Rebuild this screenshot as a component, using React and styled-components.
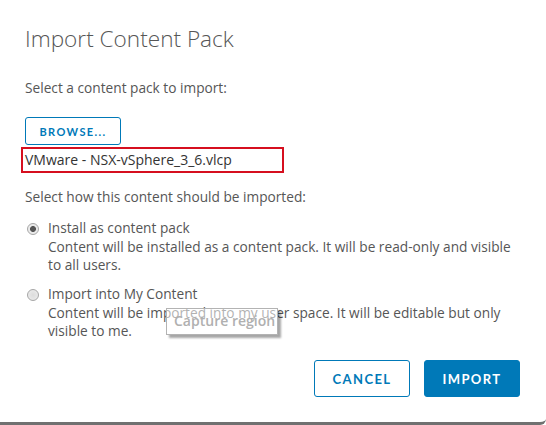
import React from "react";
import styled, { createGlobalStyle } from "styled-components";

const Global = createGlobalStyle`
  html, body { margin: 0; padding: 0; background: #fff; }
  body { font-family: "Open Sans", "Noto Sans", "Liberation Sans", sans-serif; color: #565656; }
  * { box-sizing: border-box; }
`;

const Dialog = styled.div`
  position: relative;
  width: 546px;
  height: 425px;
  background: #fff;
  border-bottom: 3px solid #707070;
  border-bottom-right-radius: 6px;
  padding: 24px 25px 0 25px;
  display: flex;
  flex-direction: column;
  overflow: hidden;
`;

const Title = styled.h1`
  margin: 0;
  font-weight: 300;
  font-size: 22.6px;
  line-height: 30px;
  color: #565656;
`;

const Text = styled.p`
  margin: ${(p) => p.$mt || 0}px 0 0 0;
  font-size: 13.7px;
  line-height: 18px;
  color: #565656;
`;

const OutlineButton = styled.button`
  width: 96px;
  height: ${(p) => p.$h}px;
  border: 1px solid #0079b8;
  border-radius: 3px;
  background: #fff;
  color: #0079b8;
  font-family: Lato, "Open Sans", sans-serif;
  font-weight: 700;
  font-size: ${(p) => p.$fs}px;
  letter-spacing: 1.4px;
  padding: 0;
  margin-top: ${(p) => p.$mt || 0}px;
`;

const PrimaryButton = styled(OutlineButton)`
  background: #0079b8;
  color: #fff;
`;

const FileBox = styled.div`
  margin: 2px 0 0 -4px;
  width: 263px;
  height: 26px;
  border: 2px solid #d60f1f;
  padding: 0 0 0 2px;
  font-size: 14px;
  line-height: 21px;
  color: #333;
`;

const Option = styled.div`
  display: flex;
  gap: 9px;
  margin-top: ${(p) => p.$mt}px;
`;

const Radio = styled.span`
  flex: none;
  width: 12px;
  height: 12px;
  margin: 4px 0 0 2px;
  border-radius: 50%;
  border: 1px solid #a6a6a6;
  background: ${(p) =>
    p.$checked
      ? "radial-gradient(circle, #555 0 2.6px, #e8e8e8 3.3px, #f4f4f4 100%)"
      : "radial-gradient(circle, #dcdcdc 0, #eeeeee 100%)"};
`;

const OptionBody = styled.div`
  display: flex;
  flex-direction: column;
  gap: 1px;
  width: 480px;
  font-size: 13.7px;
  line-height: 18px;
  color: #565656;
`;

const Footer = styled.div`
  display: flex;
  justify-content: flex-end;
  gap: 14px;
  margin-top: auto;
  margin-bottom: 25px;
  margin-right: 1px;
`;

const Tooltip = styled.div`
  position: absolute;
  left: 166px;
  top: 308px;
  width: 112px;
  height: 27px;
  border: 1px solid #b3b3b3;
  background: rgba(255, 255, 255, 0.55);
  box-shadow: 3px 3px 2px rgba(0, 0, 0, 0.35);
  font-family: "Open Sans", "Noto Sans", sans-serif;
  font-weight: 600;
  font-size: 14px;
  white-space: nowrap;
  color: #b0b0b0;
  padding: 2px 0 0 7px;
`;

export default function App() {
  return (
    <>
      <Global />
      <Dialog>
        <Title>Import Content Pack</Title>
        <Text $mt={25}>Select a content pack to import:</Text>
        <OutlineButton $h={28} $fs={11} $mt={20}>BROWSE...</OutlineButton>
        <FileBox>VMware - NSX-vSphere_3_6.vlcp</FileBox>
        <Text $mt={15}>Select how this content should be imported:</Text>
        <Option $mt={13}>
          <Radio $checked />
          <OptionBody>
            <span>Install as content pack</span>
            <span>Content will be installed as a content pack. It will be read-only and visible to all users.</span>
          </OptionBody>
        </Option>
        <Option $mt={11}>
          <Radio />
          <OptionBody>
            <span>Import into My Content</span>
            <span>Content will be imported into my user space. It will be editable but only visible to me.</span>
          </OptionBody>
        </Option>
        <Footer>
          <OutlineButton $h={37} $fs={13}>CANCEL</OutlineButton>
          <PrimaryButton $h={37} $fs={13}>IMPORT</PrimaryButton>
        </Footer>
        <Tooltip>Capture region</Tooltip>
      </Dialog>
    </>
  );
}
